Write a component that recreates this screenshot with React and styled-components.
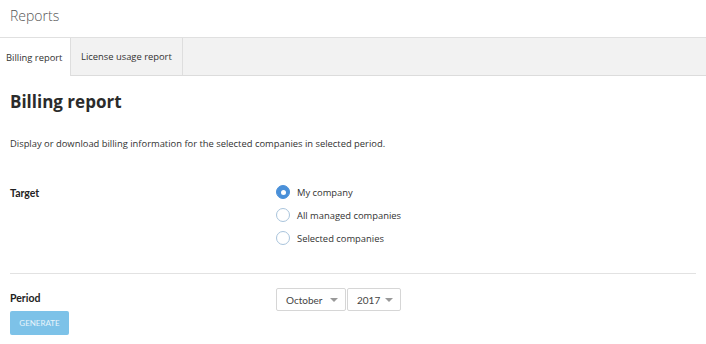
import React from "react";
import styled, { createGlobalStyle } from "styled-components";

const Global = createGlobalStyle`
  html, body { margin: 0; padding: 0; background: #fff; }
  body { font-family: "Open Sans", "Noto Sans", sans-serif; color: #333; }
  * { box-sizing: border-box; }
`;

const Page = styled.div`
  width: 706px;
  height: 344px;
  overflow: hidden;
  display: flex;
  flex-direction: column;
`;

const PageTitle = styled.div`
  height: 37px;
  padding: 6px 0 0 10px;
  font-size: 14px;
  font-weight: 300;
  color: #555;
  line-height: 20px;
`;

const TabBar = styled.div`
  display: flex;
  height: 39px;
  background: #f2f2f2;
  border-top: 1px solid #e0e0e0;
  border-bottom: 1px solid #dcdcdc;
`;

const Tab = styled.div`
  display: flex;
  align-items: center;
  flex-shrink: 0;
  white-space: nowrap;
  padding: 0 ${p => (p.$active ? "6px" : "10px")};
  font-size: 9.4px;
  color: #333;
  background: ${p => (p.$active ? "#fff" : "transparent")};
  margin-bottom: ${p => (p.$active ? "-1px" : "0")};
  border-right: 1px solid #dedede;
  width: ${p => (p.$w ? `${p.$w}px` : "auto")};
`;

const Content = styled.div`
  padding: 0 10px;
  display: flex;
  flex-direction: column;
  align-items: flex-start;
`;

const Heading = styled.h1`
  margin: 14px 0 0;
  font-size: 17px;
  font-weight: 700;
  color: #2b2b2b;
  line-height: 24px;
`;

const Description = styled.p`
  margin: 23px 0 0;
  font-size: 9.4px;
  color: #333;
  line-height: 14px;
`;

const FieldRow = styled.div`
  display: grid;
  grid-template-columns: 266px auto;
  align-items: start;
  margin-top: ${p => p.$mt}px;
`;

const Label = styled.div`
  font-family: Lato, sans-serif;
  font-weight: 700;
  font-size: 10.5px;
  line-height: 13px;
  color: #222;
  padding-top: ${p => p.$pt || 0}px;
`;

const RadioList = styled.div`
  display: flex;
  flex-direction: column;
  gap: 9px;
`;

const RadioItem = styled.label`
  display: flex;
  align-items: center;
  gap: 7px;
  font-size: 9.4px;
  color: #333;
  height: 14px;
`;

const RadioCircle = styled.span`
  width: 14px;
  height: 14px;
  border-radius: 50%;
  border: 1px solid ${p => (p.$checked ? "#4a90d9" : "#a9c4dc")};
  background: ${p => (p.$checked ? "#4a90d9" : "#fff")};
  display: flex;
  align-items: center;
  justify-content: center;
  &::after {
    content: "";
    display: ${p => (p.$checked ? "block" : "none")};
    width: 5px;
    height: 5px;
    border-radius: 50%;
    background: #fff;
  }
`;

const Divider = styled.hr`
  margin: 28px 0 0;
  border: 0;
  border-top: 1px solid #e2e2e2;
  width: 686px;
`;

const Selects = styled.div`
  display: flex;
  gap: 1px;
`;

const Select = styled.div`
  width: ${p => p.$w}px;
  height: 23px;
  border: 1px solid #d6d6d6;
  border-radius: 2px;
  display: flex;
  align-items: center;
  justify-content: space-between;
  padding: 0 7px 0 9px;
  font-family: Lato, sans-serif;
  font-size: 10px;
  color: #444;
  background: #fff;
`;

const Caret = styled.span`
  width: 0;
  height: 0;
  border-left: 4px solid transparent;
  border-right: 4px solid transparent;
  border-top: 4px solid #999;
`;

const Button = styled.button`
  margin-top: 0;
  width: 59px;
  height: 24px;
  border: 0;
  border-radius: 2px;
  background: #7dc2e8;
  color: #e8f4fb;
  font-family: Lato, sans-serif;
  font-size: 8px;
  padding: 0;
`;

export default function App() {
  return (
    <Page>
      <Global />
      <PageTitle>Reports</PageTitle>
      <TabBar>
        <Tab $active $w={71}>Billing report</Tab>
        <Tab>License usage report</Tab>
      </TabBar>
      <Content>
        <Heading>Billing report</Heading>
        <Description>
          Display or download billing information for the selected companies in selected period.
        </Description>
        <FieldRow $mt={34}>
          <Label $pt={2}>Target</Label>
          <RadioList>
            <RadioItem><RadioCircle $checked />My company</RadioItem>
            <RadioItem><RadioCircle />All managed companies</RadioItem>
            <RadioItem><RadioCircle />Selected companies</RadioItem>
          </RadioList>
        </FieldRow>
        <Divider />
        <FieldRow $mt={14}>
          <Label $pt={4}>Period</Label>
          <Selects>
            <Select $w={70}>October<Caret /></Select>
            <Select $w={54}>2017<Caret /></Select>
          </Selects>
        </FieldRow>
        <Button>GENERATE</Button>
      </Content>
    </Page>
  );
}
